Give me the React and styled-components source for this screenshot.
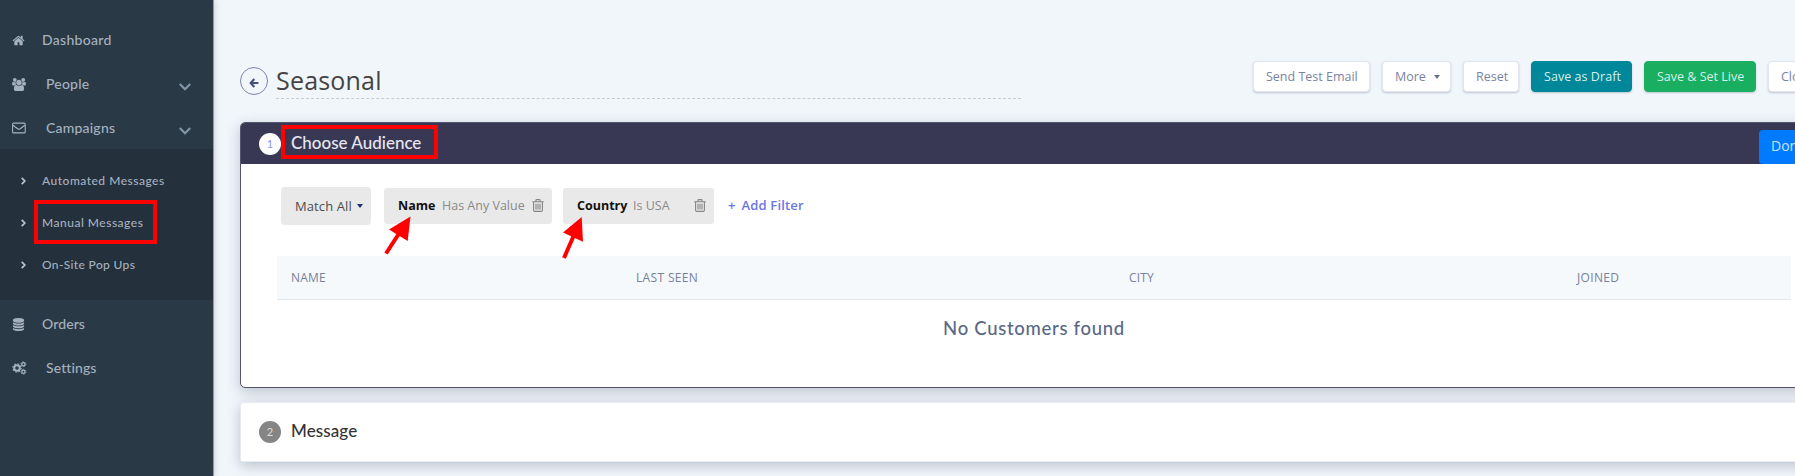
import React from "react";
import styled, { createGlobalStyle } from "styled-components";

const rounded = `Lato, "Open Sans", sans-serif`;
const body = `"Open Sans", "Noto Sans", sans-serif`;

const Global = createGlobalStyle`
  *, *::before, *::after { box-sizing: border-box; }
  body { margin: 0; background: #f1f6fb; font-family: ${body}; overflow: hidden; }
  svg { display: block; flex: none; }
`;

const Page = styled.div`
  position: relative;
  display: flex;
  width: 1795px;
  height: 476px;
  overflow: hidden;
`;

const Sidebar = styled.nav`
  flex: none;
  width: 214px;
  padding-top: 18px;
  background: #2a3946;
  border-right: 1px solid #8f99a3;
  box-shadow: 0 0 7px rgba(40, 50, 60, 0.22);
  z-index: 1;
`;

const NavItem = styled.a`
  display: flex;
  align-items: center;
  height: 44px;
  padding: 0 22px 0 12px;
  color: #a5b1bf;
  font: 500 14px/20px ${rounded};
  letter-spacing: ${(p) => p.$track || 0}px;
`;

const NavIcon = styled.span`
  width: ${(p) => (p.$wide ? 34 : 30)}px;
`;

const NavLabel = styled.span`
  flex: 1;
`;

const SubMenu = styled.div`
  height: 151px;
  margin: -1px 0 2px;
  padding-top: 11px;
  background: #24303c;
`;

const SubItem = styled.a`
  position: relative;
  display: flex;
  align-items: center;
  gap: 16px;
  height: 42px;
  padding-left: 21px;
  color: #a5b1bf;
  font: 500 12px/18px ${rounded};
  letter-spacing: ${(p) => p.$track || 0}px;
`;

const Highlight = styled.span`
  position: absolute;
  top: ${(p) => p.$top}px;
  left: ${(p) => p.$left}px;
  width: ${(p) => p.$w}px;
  height: ${(p) => p.$h}px;
  border: 4px solid #fe0000;
`;

const Main = styled.main`
  flex: none;
  width: 1610px;
  padding: 61px 0 0 26px;
`;

const TopBar = styled.header`
  display: flex;
  align-items: flex-start;
  height: 61px;
`;

const BackButton = styled.span`
  flex: none;
  display: grid;
  place-items: center;
  width: 28px;
  height: 28px;
  margin-top: 6px;
  padding-top: 3px;
  border: 1px solid #7c86a8;
  border-radius: 50%;
`;

const Title = styled.h1`
  flex: none;
  width: 745px;
  height: 38px;
  margin: 0 232px 0 8px;
  border-bottom: 1px dashed #c6ccd0;
  color: #444;
  font: 400 25px/38px ${body};
  letter-spacing: ${(p) => p.$track}px;
`;

const Actions = styled.div`
  display: flex;
  flex: none;
  gap: 12px;
`;

const Button = styled.button`
  display: flex;
  align-items: center;
  justify-content: flex-start;
  flex: none;
  gap: 8px;
  width: ${(p) => p.$w}px;
  height: 31px;
  padding: 0 0 0 12px;
  border: 1px solid ${(p) => p.$bg || "#e2e6ee"};
  border-radius: 4px;
  background: ${(p) => p.$bg || "#fff"};
  box-shadow: 0 1px 2px rgba(50, 50, 93, 0.25);
  color: ${(p) => (p.$bg ? "#d5f0ec" : "#7a84a0")};
  font: 400 12.5px/18px ${body};
  letter-spacing: ${(p) => p.$track || 0}px;
  white-space: nowrap;
`;

const Caret = styled.span`
  border: 3.5px solid transparent;
  border-top: 4px solid ${(p) => p.$color};
  border-bottom: 0;
`;

const Panel = styled.section`
  height: 266px;
  margin-bottom: 14px;
  border: 1px solid #55566d;
  border-radius: 5px;
  background: #fff;
  box-shadow: 0 4px 14px rgba(50, 60, 93, 0.28);
  overflow: visible;
`;

const StepHeader = styled.div`
  position: relative;
  display: flex;
  align-items: center;
  height: ${(p) => p.$h}px;
  padding-left: 18px;
  border-radius: 4px 4px 0 0;
  background: ${(p) => p.$bg};
`;

const StepNumber = styled.span`
  display: grid;
  place-items: center;
  width: 22px;
  height: 22px;
  border-radius: 50%;
  background: ${(p) => p.$bg};
  color: ${(p) => p.$color};
  font: 400 11px/22px ${rounded};
`;

const StepTitle = styled.h2`
  flex: 1;
  margin: 0 0 2px 10px;
  color: ${(p) => p.$color};
  font: 500 17px/24px ${rounded};
  letter-spacing: ${(p) => p.$track}px;
`;

const DoneButton = styled.button`
  align-self: flex-end;
  width: 70px;
  height: 34px;
  margin-right: -6px;
  padding: 0 0 2px 12px;
  border: 0;
  border-radius: 4px;
  background: #007bff;
  color: #c7e2ff;
  font: 400 14px/20px ${body};
  text-align: left;
`;

const Filters = styled.div`
  display: flex;
  align-items: center;
  height: 38px;
  margin: 23px 0 0 40px;
`;

const MatchSelect = styled.div`
  display: flex;
  align-items: center;
  gap: 5px;
  width: 90px;
  height: 38px;
  margin-right: 13px;
  padding: 0 0 1px 14px;
  border-radius: 4px;
  background: #e9e9e9;
  color: #4c4c4c;
  font: 400 13px/20px ${body};
  letter-spacing: ${(p) => p.$track}px;
  white-space: nowrap;
`;

const Chip = styled.div`
  display: flex;
  align-items: center;
  width: ${(p) => p.$w}px;
  height: 36px;
  margin-right: 11px;
  padding: 0 8px 1px 14px;
  border-radius: 3px;
  background: #e9e9e9;
  color: #8a8a8a;
  font: 400 12.5px/20px ${body};
  white-space: nowrap;
`;

const ChipField = styled.b`
  width: ${(p) => p.$w}px;
  color: #111;
  font-weight: 700;
  letter-spacing: ${(p) => p.$track || 0}px;
`;

const ChipRule = styled.span`
  flex: 1;
  letter-spacing: ${(p) => p.$track || 0}px;
`;

const AddFilter = styled.a`
  display: flex;
  gap: 6px;
  margin-left: 3px;
  padding-bottom: 2px;
  color: #6c75e6;
  font: 600 13px/20px ${body};
  letter-spacing: ${(p) => p.$track || 0}px;
`;

const TableHead = styled.div`
  display: grid;
  grid-template-columns: 345px 493px 448px 1fr;
  align-items: center;
  width: 1514px;
  height: 44px;
  margin: 31px 0 0 36px;
  padding-left: 14px;
  border-bottom: 1px solid #e2e8ee;
  background: #f5f9fc;
  color: #77819b;
  font: 400 12px/18px ${body};
`;

const HeadCell = styled.span`
  letter-spacing: ${(p) => p.$track || 0}px;
`;

const EmptyNote = styled.p`
  width: 1514px;
  margin: 15px 0 0 36px;
  color: #5a6886;
  font: 500 18.5px/26px ${rounded};
  letter-spacing: ${(p) => p.$track}px;
  text-align: center;
`;

const MessageCard = styled.section`
  height: 60px;
  border: 1px solid #e9edf3;
  border-radius: 4px;
  background: #fff;
  box-shadow: 0 4px 13px rgba(50, 60, 93, 0.28);
`;

const Arrows = styled.svg`
  position: absolute;
  top: 210px;
  left: 380px;
`;

const HomeIcon = () => (
  <svg width="13" height="13" viewBox="0 0 1792 1792" fill="currentColor">
    <path d="M1472 992v480q0 26-19 45t-45 19h-384v-384h-256v384h-384q-26 0-45-19t-19-45v-480q0-1 .5-3t.5-3l575-474 575 474q1 2 1 6zm223-69l-62 74q-8 9-21 11h-3q-13 0-21-7l-692-577-692 577q-12 8-24 7-13-2-21-11l-62-74q-8-10-7-23.5t11-21.5l719-599q32-26 76-26t76 26l244 204v-195q0-14 9-23t23-9h192q14 0 23 9t9 23v408l219 182q10 8 11 21.5t-7 23.5z" />
  </svg>
);

const UsersIcon = () => (
  <svg width="14" height="13" viewBox="0 0 1920 1792" fill="currentColor">
    <path d="M593 896q-162 5-265 128h-134q-82 0-138-40.5t-56-118.5q0-353 124-353 6 0 43.5 21t97.5 42.5 119 21.5q67 0 133-23-5 37-5 66 0 139 81 256zm1071 637q0 120-73 189.5t-194 69.5h-874q-121 0-194-69.5t-73-189.5q0-53 3.5-103.5t14-109 26.5-108.5 43-97.5 62-81 85.5-53.5 111.5-20q10 0 43 21.5t73 48 107 48 135 21.5 135-21.5 107-48 73-48 43-21.5q61 0 111.5 20t85.5 53.5 62 81 43 97.5 26.5 108.5 14 109 3.5 103.5zm-1024-1277q0 106-75 181t-181 75-181-75-75-181 75-181 181-75 181 75 75 181zm704 384q0 159-112.5 271.5t-271.5 112.5-271.5-112.5-112.5-271.5 112.5-271.5 271.5-112.5 271.5 112.5 112.5 271.5zm576 225q0 78-56 118.5t-138 40.5h-134q-103-123-265-128 81-117 81-256 0-29-5-66 66 23 133 23 59 0 119-21.5t97.5-42.5 43.5-21q124 0 124 353zm-128-609q0 106-75 181t-181 75-181-75-75-181 75-181 181-75 181 75 75 181z" />
  </svg>
);

const EnvelopeIcon = () => (
  <svg width="14" height="12" viewBox="0 0 14 12" fill="none" stroke="currentColor" strokeWidth="1.1">
    <rect x=".6" y="1.1" width="12.6" height="9.8" rx="1" />
    <path d="M1 3.2 5.6 6.8Q6.9 7.8 8.2 6.8L12.9 3.2" />
  </svg>
);

const DatabaseIcon = () => (
  <svg width="13" height="13" viewBox="0 0 1792 1792" fill="currentColor">
    <path d="M896 768q237 0 443-43t325-127v170q0 69-103 128t-280 93.5-385 34.5-385-34.5-280-93.5-103-128v-170q119 84 325 127t443 43zm0 768q237 0 443-43t325-127v170q0 69-103 128t-280 93.5-385 34.5-385-34.5-280-93.5-103-128v-170q119 84 325 127t443 43zm0-384q237 0 443-43t325-127v170q0 69-103 128t-280 93.5-385 34.5-385-34.5-280-93.5-103-128v-170q119 84 325 127t443 43zm0-1152q208 0 385 34.5t280 93.5 103 128v128q0 69-103 128t-280 93.5-385 34.5-385-34.5-280-93.5-103-128v-128q0-69 103-128t280-93.5 385-34.5z" />
  </svg>
);

const CogsIcon = () => (
  <svg width="15" height="14" viewBox="0 0 15 14" fill="none" stroke="currentColor">
    <circle cx="5" cy="7" r="2.8" strokeWidth="2" />
    <circle cx="5" cy="7" r="4.1" strokeWidth="1.2" strokeDasharray="1.61 1.61" />
    <circle cx="11.4" cy="3.2" r="1.6" strokeWidth="1.3" />
    <circle cx="11.4" cy="3.2" r="2.5" strokeWidth=".8" strokeDasharray="1.31 1.31" />
    <circle cx="11.4" cy="10.8" r="1.6" strokeWidth="1.3" />
    <circle cx="11.4" cy="10.8" r="2.5" strokeWidth=".8" strokeDasharray="1.31 1.31" />
  </svg>
);

const ChevronDown = () => (
  <svg width="12" height="13" viewBox="0 0 12 13" fill="none" stroke="#8496a8" strokeWidth="2.1">
    <path d="M.8 6 6 11.2 11.2 6" />
  </svg>
);

const ChevronRight = () => (
  <svg width="5" height="8" viewBox="0 0 5 8" fill="none" stroke="#bac4ce" strokeWidth="1.7">
    <path d="M.7.9 3.8 4 .7 7.1" />
  </svg>
);

const BackArrow = () => (
  <svg width="10" height="10" viewBox="0 0 10 10" fill="none" stroke="#46507c" strokeWidth="2.1">
    <path d="M5.3 1 1.7 5l3.6 4M1.7 5H9.4" />
  </svg>
);

const TrashIcon = () => (
  <svg width="12" height="13" viewBox="0 0 12 13" fill="none" stroke="#858585" strokeWidth="1.1">
    <path d="M.3 2.8h11.4M3.9 2.6V1.4q0-.8.8-.8h2.6q.8 0 .8.8v1.2M1.6 3v8.2q0 1.2 1.2 1.2h6.4q1.2 0 1.2-1.2V3M4 4.8v5.6M6 4.8v5.6M8 4.8v5.6" />
  </svg>
);

export default function App() {
  return (
    <Page>
      <Global />
      <Sidebar>
        <NavItem $track={0.3}>
          <NavIcon><HomeIcon /></NavIcon>
          <NavLabel>Dashboard</NavLabel>
        </NavItem>
        <NavItem $track={0.2}>
          <NavIcon $wide><UsersIcon /></NavIcon>
          <NavLabel>People</NavLabel>
          <ChevronDown />
        </NavItem>
        <NavItem $track={0.2}>
          <NavIcon $wide><EnvelopeIcon /></NavIcon>
          <NavLabel>Campaigns</NavLabel>
          <ChevronDown />
        </NavItem>
        <SubMenu>
          <SubItem $track={0.5}><ChevronRight />Automated Messages</SubItem>
          <SubItem $track={0.5}>
            <ChevronRight />Manual Messages
            <Highlight $top={-2} $left={34} $w={123} $h={44} />
          </SubItem>
          <SubItem $track={0.35}><ChevronRight />On-Site Pop Ups</SubItem>
        </SubMenu>
        <NavItem $track={0.1}>
          <NavIcon><DatabaseIcon /></NavIcon>
          <NavLabel>Orders</NavLabel>
        </NavItem>
        <NavItem $track={0.1}>
          <NavIcon $wide><CogsIcon /></NavIcon>
          <NavLabel>Settings</NavLabel>
        </NavItem>
      </Sidebar>

      <Main>
        <TopBar>
          <BackButton><BackArrow /></BackButton>
          <Title $track={0.2}>Seasonal</Title>
          <Actions>
            <Button $w={117}>Send Test Email</Button>
            <Button $w={69}>More <Caret $color="#68728f" /></Button>
            <Button $w={56}>Reset</Button>
            <Button $w={101} $bg="#008799" $track={0.05}>Save as Draft</Button>
            <Button $w={112} $bg="#1aae60">Save &amp; Set Live</Button>
            <Button $w={62}>Close</Button>
          </Actions>
        </TopBar>

        <Panel>
          <StepHeader $h={41} $bg="#393854">
            <StepNumber $bg="#fff" $color="#8f8ff0">1</StepNumber>
            <StepTitle $color="#e6e6f2" $track={0}>Choose Audience</StepTitle>
            <DoneButton>Done</DoneButton>
            <Highlight $top={2} $left={40} $w={157} $h={34} />
          </StepHeader>
          <Filters>
            <MatchSelect $track={0.1}>Match All <Caret $color="#1d2f6f" /></MatchSelect>
            <Chip $w={168}>
              <ChipField $w={44}>Name</ChipField>
              <ChipRule>Has Any Value</ChipRule>
              <TrashIcon />
            </Chip>
            <Chip $w={151}>
              <ChipField $w={56}>Country</ChipField>
              <ChipRule>Is USA</ChipRule>
              <TrashIcon />
            </Chip>
            <AddFilter $track={0.15}><span>+</span><span>Add Filter</span></AddFilter>
          </Filters>
          <TableHead>
            <HeadCell $track={0.2}>NAME</HeadCell>
            <HeadCell $track={0.35}>LAST SEEN</HeadCell>
            <HeadCell $track={0.2}>CITY</HeadCell>
            <HeadCell $track={0.35}>JOINED</HeadCell>
          </TableHead>
          <EmptyNote $track={0.7}>No Customers found</EmptyNote>
        </Panel>

        <MessageCard>
          <StepHeader $h={58} $bg="#fff">
            <StepNumber $bg="#858585" $color="#ddd">2</StepNumber>
            <StepTitle $color="#333" $track={0.1}>Message</StepTitle>
          </StepHeader>
        </MessageCard>
      </Main>

      <Arrows width="210" height="55" viewBox="380 210 210 55" fill="#fe0000" stroke="#fe0000">
        <path d="M410.5 216.5 389 229.5 407.7 241Z" stroke="none" />
        <path d="M386 253.5 400 232" strokeWidth="4" />
        <path d="M581.7 217 563 232.5 583 241.8Z" stroke="none" />
        <path d="M564 258 574 235" strokeWidth="4" />
      </Arrows>
    </Page>
  );
}
